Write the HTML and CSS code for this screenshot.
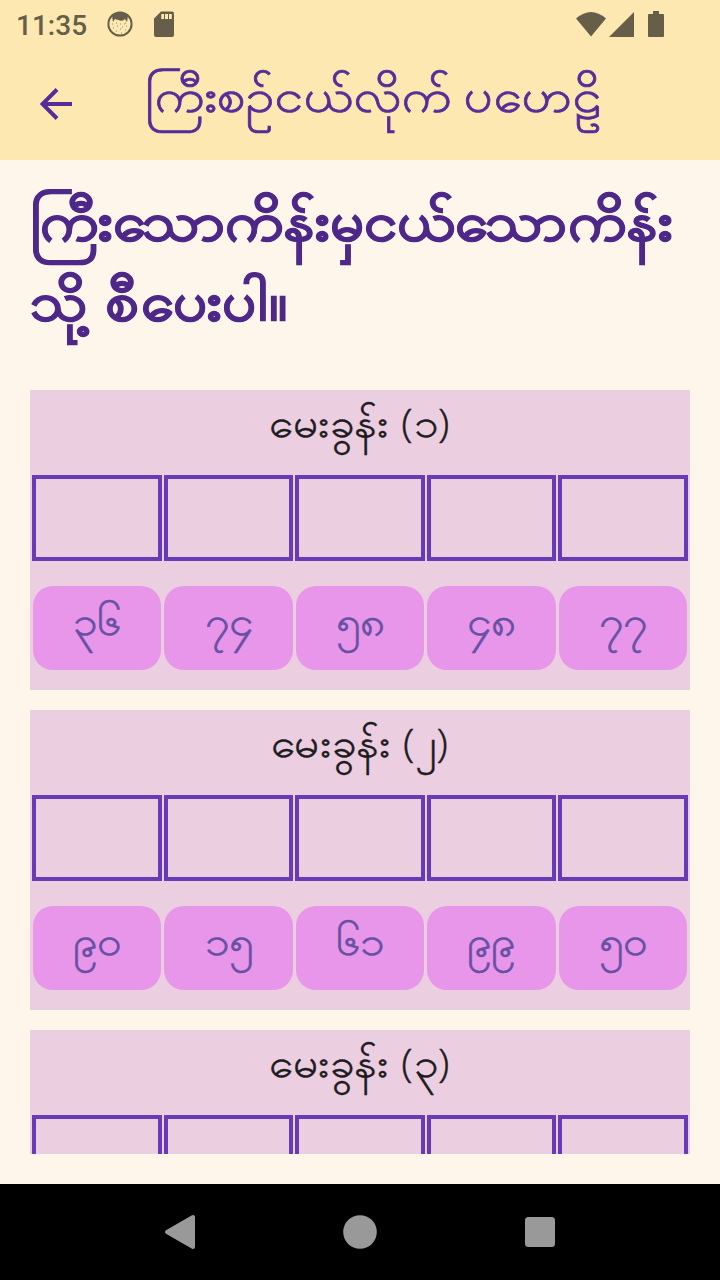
FILE: index.html
```
<!DOCTYPE html>
<html lang="my">
<head>
<meta charset="utf-8">
<title>ကြီးစဉ်ငယ်လိုက် ပဟေဠိ</title>
<link rel="stylesheet" href="styles.css">
</head>
<body>
<div class="screen">
  <header class="top">
    <div class="status">
      <span class="clock">11:35</span>
      <svg class="face" width="26" height="26" viewBox="0 0 26 26"><circle cx="13" cy="13" r="11.6" fill="none" stroke="currentColor" stroke-width="2"/><path d="M5 5Q8 1 13 1T21 5L20 11L18 8Q16 10.500 13 9.500T8 8L6 11Z" fill="currentColor"/><path d="M5 13h1m3-1h1m3 1h1m4-1h1M6 17h1m3-2h1m4 1h1m3-1h1M9 20h1m3-2h1m4 1h1m-5 3h1m2-9h1" stroke="currentColor" stroke-width=".7"/></svg>
      <svg class="sd" width="20" height="26" viewBox="0 0 20 26"><path fill="currentColor" fill-rule="evenodd" d="M7 .5H18A2 2 0 0 1 20 2.500V24A2 2 0 0 1 18 26H2A2 2 0 0 1 0 24V7.500ZM7.300 3V8H10V3ZM11 3V8H14V3ZM15 3V8H17.800V3Z"/></svg>
      <svg class="signals" width="90" height="27" viewBox="0 0 90 27"><g fill="currentColor"><path d="M0 7.500Q15-5.500 30 7.500L15 25.500Z"/><path d="M33 26L58 1V26Z"/><path d="M72 4Q72 3 73 3H77V0H83V3H87Q88 3 88 4V25Q88 26 87 26H73Q72 26 72 25Z"/></g></svg>
    </div>
    <div class="appbar">
      <svg class="back" width="32" height="32" viewBox="0 0 32 32"><path d="M32 16H2.500M17 1.500L2.500 16L17 30.500" fill="none" stroke="currentColor" stroke-width="4"/></svg>
      <h1 class="title">ကြီးစဉ်ငယ်လိုက် ပဟေဠိ</h1>
    </div>
  </header>
  <main class="content">
    <h2 class="lead">ကြီးသောကိန်းမှငယ်သောကိန်း<br><span class="lead-end">သို့ စီပေးပါ။</span></h2>
    <div class="list">
      <section class="card">
        <h3 class="question">မေးခွန်း <span class="paren">(</span>၁<span class="paren">)</span></h3>
        <div class="slots"><div class="slot"></div><div class="slot"></div><div class="slot"></div><div class="slot"></div><div class="slot"></div></div>
        <div class="choices"><button class="choice"><span class="number">၃၆</span></button><button class="choice"><span class="number">၇၄</span></button><button class="choice"><span class="number">၅၈</span></button><button class="choice"><span class="number">၄၈</span></button><button class="choice"><span class="number">၇၇</span></button></div>
      </section>
      <section class="card">
        <h3 class="question">မေးခွန်း <span class="paren">(</span>၂<span class="paren">)</span></h3>
        <div class="slots"><div class="slot"></div><div class="slot"></div><div class="slot"></div><div class="slot"></div><div class="slot"></div></div>
        <div class="choices"><button class="choice"><span class="number">၉၀</span></button><button class="choice"><span class="number">၁၅</span></button><button class="choice"><span class="number">၆၁</span></button><button class="choice"><span class="number">၉၉</span></button><button class="choice"><span class="number">၅၀</span></button></div>
      </section>
      <section class="card">
        <h3 class="question">မေးခွန်း <span class="paren">(</span>၃<span class="paren">)</span></h3>
        <div class="slots"><div class="slot"></div><div class="slot"></div><div class="slot"></div><div class="slot"></div><div class="slot"></div></div>
      </section>
    </div>
  </main>
  <nav class="nav">
    <svg class="nav-icon" width="36" height="36" viewBox="0 0 36 36"><path d="M5 18L31 3V33Z" fill="currentColor" stroke="currentColor" stroke-width="4" stroke-linejoin="round"/></svg>
    <svg class="nav-icon" width="36" height="36" viewBox="0 0 36 36"><circle cx="18" cy="18" r="16.8" fill="currentColor"/></svg>
    <svg class="nav-icon" width="36" height="36" viewBox="0 0 36 36"><rect x="3" y="3" width="30" height="30" rx="3.500" fill="currentColor"/></svg>
  </nav>
</div>
</body>
</html>
```
FILE: styles.css
```
* { box-sizing: border-box; }
body { margin: 0; font-family: Roboto, "Noto Sans", sans-serif; }
h1, h2, h3 { margin: 0; font-weight: 400; white-space: nowrap; }
svg { display: block; flex: none; }

.screen { width: 720px; height: 1280px; display: flex; flex-direction: column; background: #fff6eb; overflow: hidden; }

.top { height: 160px; flex: none; background: #fee8b2; }
.status { height: 48px; display: flex; align-items: center; padding-left: 16px; color: #665e48; }
.clock { width: 91px; font-size: 28px; font-weight: 500; letter-spacing: 0; line-height: 48px; padding-top: 3px; }
.sd { margin-left: 21px; }
.signals { margin-left: auto; margin-right: 54px; }

.appbar { height: 112px; display: flex; align-items: center; padding-left: 40px; color: #552d98; }
.title { margin-left: 73px; padding-bottom: 16px; font-size: 46.5px; line-height: 80px; transform: scaleX(1.115); transform-origin: left; -webkit-text-stroke: 0.7px currentColor; }

.content { flex: 1; min-height: 0; display: flex; flex-direction: column; padding: 22px 30px 30px; }
.lead { height: 208px; flex: none; font-size: 54px; font-weight: 700; line-height: 80px; color: #4d2888; transform: scaleX(1.102); transform-origin: left; -webkit-text-stroke: 0.9px currentColor; }
.lead-end { letter-spacing: 1.3px; }
.list { flex: 1; min-height: 0; overflow: hidden; display: flex; flex-direction: column; gap: 20px; }

.card { height: 300px; flex: none; background: #ebcee0; }
.question { height: 85px; text-align: center; font-size: 40px; line-height: 68px; word-spacing: 1px; color: #1d1b20; transform: scaleX(1.1); -webkit-text-stroke: 0.4px currentColor; }
.paren { font-family: "Open Sans", sans-serif; font-weight: 300; font-size: 38px; line-height: 1; letter-spacing: 1px; }
.slots { display: grid; grid-template-columns: repeat(5, 1fr); gap: 1.6px; padding: 0 2px; }
.slot { height: 86px; border: 4px solid #673ab7; }
.choices { display: grid; grid-template-columns: repeat(5, 1fr); gap: 3px; padding: 0 3px; margin-top: 25px; }
.choice { height: 84px; padding: 0 0 13px; border: 0; border-radius: 20px; background: #e796e9; color: #6750a4; font: 400 40px/71px Roboto, "Noto Sans", sans-serif; -webkit-text-stroke: 0.5px currentColor; }
.number { display: inline-block; transform: scaleX(1.1); }

.nav { height: 96px; flex: none; display: flex; align-items: center; justify-content: center; gap: 144px; background: #000; color: #999; }
```
